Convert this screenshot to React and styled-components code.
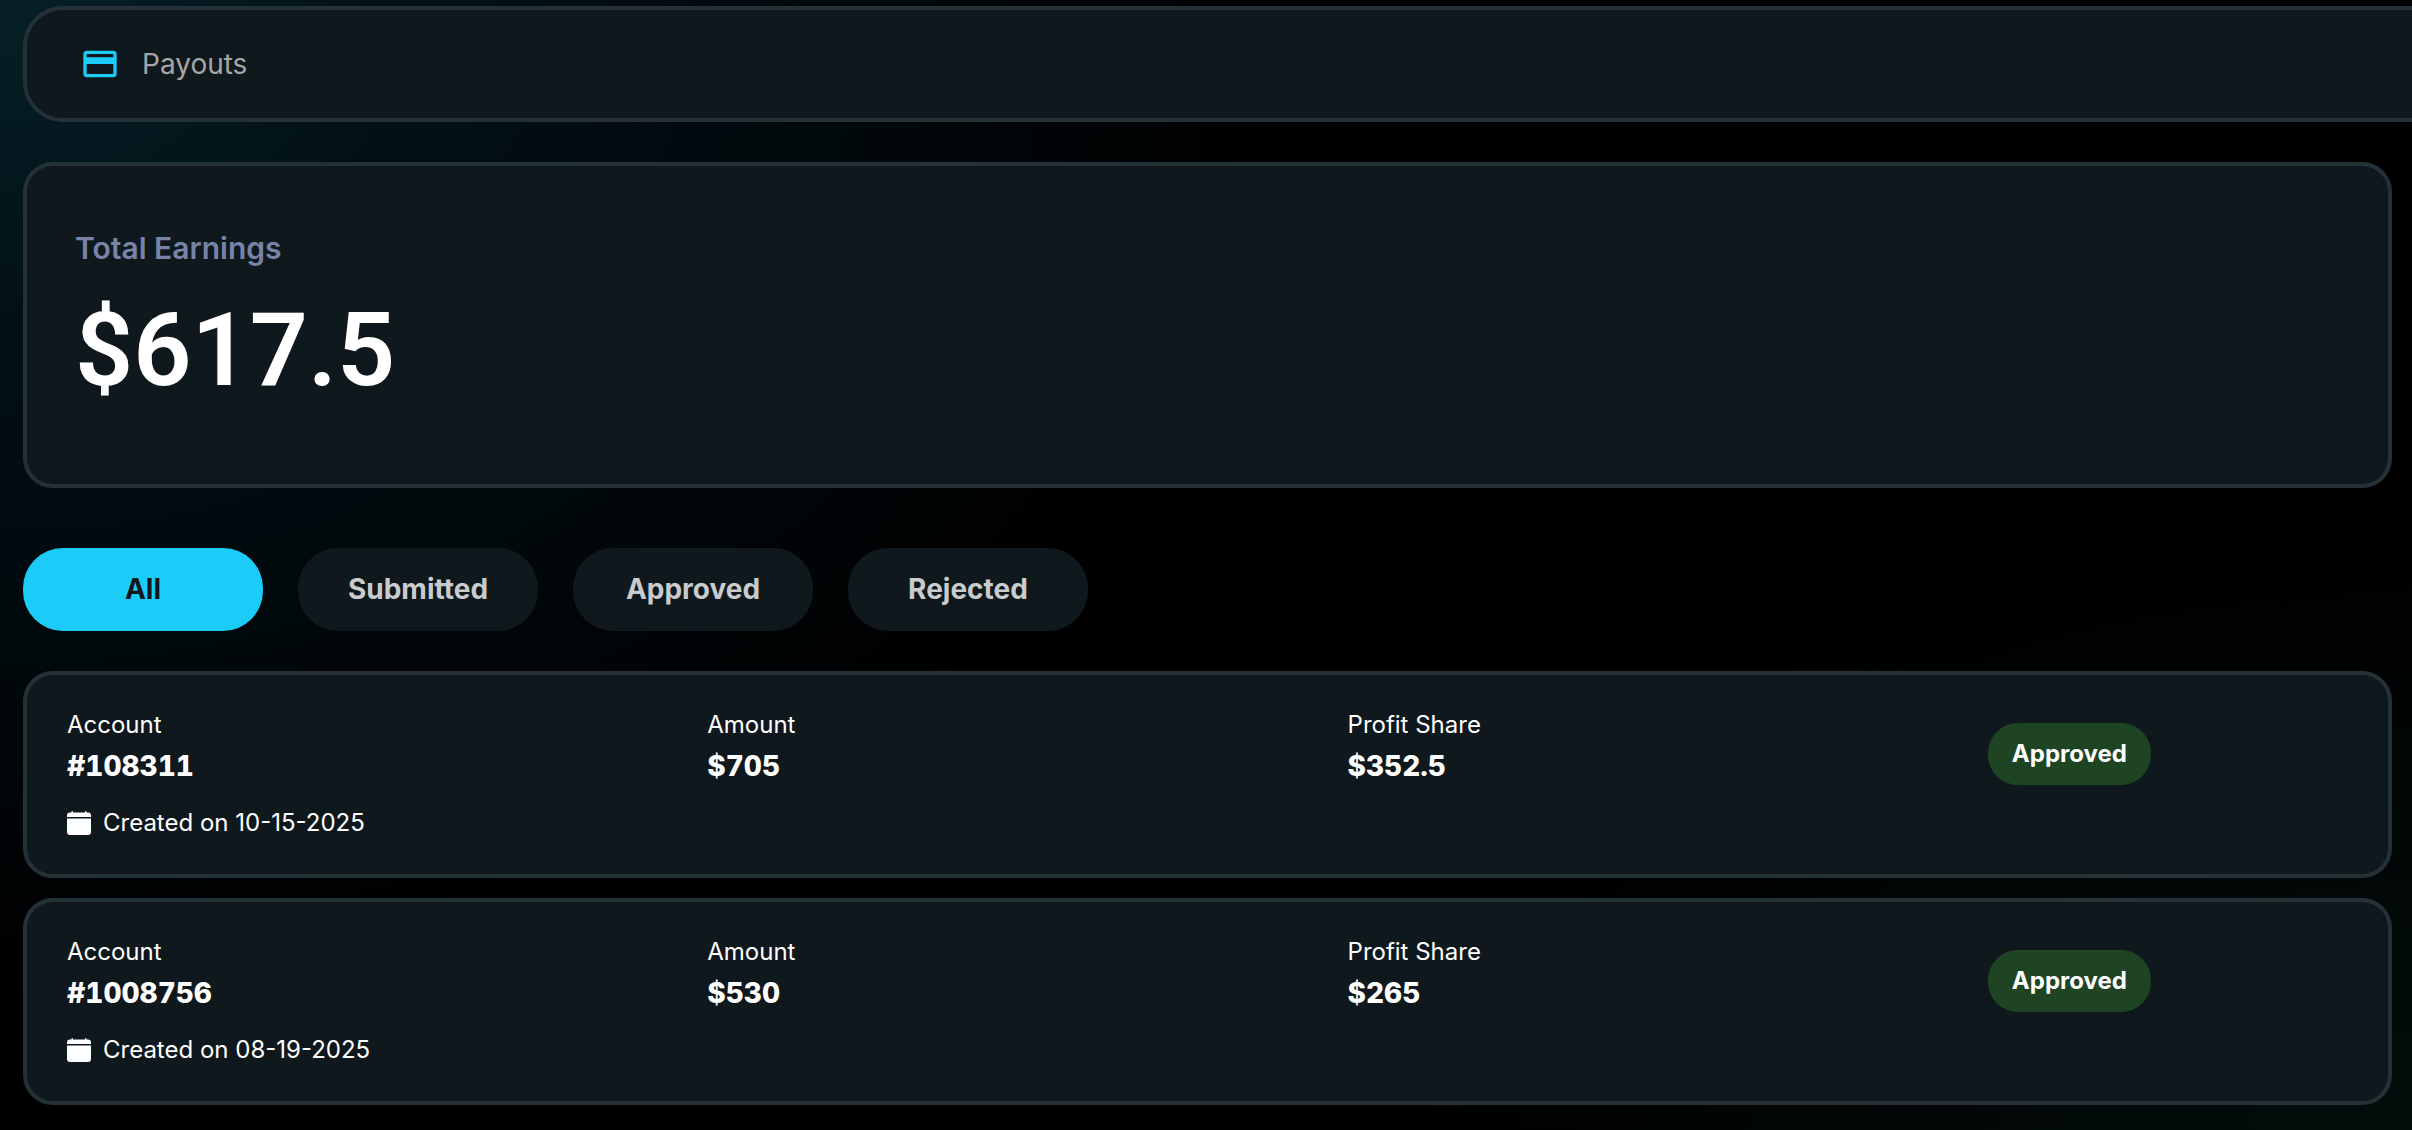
import { useState } from "react";
import styled, { createGlobalStyle } from "styled-components";
import { MdCreditCard } from "react-icons/md";
import { BsCalendarFill } from "react-icons/bs";

const GlobalStyle = createGlobalStyle`
    * {
        box-sizing: border-box;
    }
    body {
        margin: 0;
        background: #000000;
        overflow-x: hidden;
    }
`;

const PayoutsWrapper = styled.main`
    display: flex;
    flex-direction: column;
    min-height: 100vh;
    padding: 6px 20px 24px 23px;
    overflow: hidden;
    font-family: Inter, sans-serif;
    color: #FFFFFF;
    background:
        radial-gradient(1300px 1000px at 0 0, rgba(5, 32, 38, 1) 0%, rgba(2, 18, 25, 0.85) 35%, rgba(0, 0, 0, 0) 100%),
        radial-gradient(1000px 600px at 100% 100%, rgba(2, 15, 13, 0.9) 0%, rgba(0, 0, 0, 0) 100%),
        #000000;
`;

/* runs off the right side of the page */
const PageHeader = styled.header`
    display: flex;
    align-items: center;
    gap: 22px;
    height: 116px;
    margin-right: -60px;
    padding: 0 53px;
    background: #0F181D;
    border: 4px solid #243238;
    border-radius: 40px;
`;

const HeaderText = styled.h1`
    margin: 0;
    font-weight: 400;
    font-size: 28px;
    line-height: 32px;
    color: #A6A6A6;
`;

const EarningsCard = styled.section`
    margin-top: 40px;
    padding: 62px 48px 76px;
    background: #0F181D;
    border: 4px solid #243238;
    border-radius: 30px;
`;

const EarningsLabel = styled.h2`
    margin: 0;
    font-weight: 600;
    font-size: 30px;
    line-height: 40px;
    color: #7784A8;
`;

const EarningsAmount = styled.div`
    margin-top: 24px;
    font-family: Roboto, sans-serif;
    font-weight: 600;
    font-size: 102px;
    line-height: 116px;
`;

const FilterBar = styled.div`
    display: flex;
    gap: 35px;
    margin-top: 60px;
`;

const FilterButton = styled.button`
    width: 240px;
    height: 83px;
    padding: 0 0 2px;
    border: none;
    border-radius: 40px;
    background: ${(props) => (props.$active ? "#1CCCF8" : "#0F181D")};
    color: ${(props) => (props.$active ? "#10181D" : "#C9CBCC")};
    font-family: inherit;
    font-weight: 700;
    font-size: 28px;
    line-height: 32px;
    cursor: pointer;
`;

const PayoutList = styled.ul`
    display: flex;
    flex-direction: column;
    gap: 20px;
    margin: 40px 0 0;
    padding: 0;
    list-style: none;
`;

const PayoutCard = styled.li`
    padding: 32px 40px 35px;
    background: #0F181D;
    border: 4px solid #243238;
    border-radius: 30px;
`;

const PayoutDetails = styled.dl`
    display: grid;
    grid-template-columns: repeat(3, 16fr) 9fr;
    align-items: center;
    margin: 0;
`;

const DetailLabel = styled.dt`
    font-weight: 400;
    font-size: 24px;
    line-height: 36px;
`;

const DetailValue = styled.dd`
    margin: 0;
    padding: 2px 0 14px;
    font-weight: 800;
    font-size: 28px;
    line-height: 42px;
    font-variant-numeric: tabular-nums;
`;

const StatusBadge = styled.dd`
    justify-self: start;
    margin: 0;
    padding: 13px 24px;
    border-radius: 30px;
    background: #1F4424;
    font-weight: 700;
    font-size: 24px;
    line-height: 36px;
`;

const CreatedRow = styled.div`
    display: flex;
    align-items: center;
    gap: 12px;
    margin-top: 6px;
    font-size: 24px;
    line-height: 32px;
`;

const filters = ["All", "Submitted", "Approved", "Rejected"];

const payouts = [
    { account: "#108311", amount: "$705", share: "$352.5", status: "Approved", created: "10-15-2025" },
    { account: "#1008756", amount: "$530", share: "$265", status: "Approved", created: "08-19-2025" },
];

const Detail = ({ label, value }) => (
    <div>
        <DetailLabel>{label}</DetailLabel>
        <DetailValue>{value}</DetailValue>
    </div>
);

const Payouts = () => {
    const [filter, setFilter] = useState("All");
    const visible = payouts.filter((p) => filter === "All" || p.status === filter);

    return (
        <PayoutsWrapper>
            <GlobalStyle />
            <PageHeader>
                <MdCreditCard size={40} color="#1CCCF8" />
                <HeaderText>Payouts</HeaderText>
            </PageHeader>
            <EarningsCard>
                <EarningsLabel>Total Earnings</EarningsLabel>
                <EarningsAmount>$617.5</EarningsAmount>
            </EarningsCard>
            <FilterBar>
                {filters.map((name) => (
                    <FilterButton
                        key={name}
                        type="button"
                        $active={name === filter}
                        aria-pressed={name === filter}
                        onClick={() => setFilter(name)}
                    >
                        {name}
                    </FilterButton>
                ))}
            </FilterBar>
            <PayoutList>
                {visible.map((payout) => (
                    <PayoutCard key={payout.account}>
                        <PayoutDetails>
                            <Detail label="Account" value={payout.account} />
                            <Detail label="Amount" value={payout.amount} />
                            <Detail label="Profit Share" value={payout.share} />
                            <StatusBadge>{payout.status}</StatusBadge>
                        </PayoutDetails>
                        <CreatedRow>
                            <BsCalendarFill size={24} />
                            <span>Created on {payout.created}</span>
                        </CreatedRow>
                    </PayoutCard>
                ))}
            </PayoutList>
        </PayoutsWrapper>
    );
};

export default Payouts;
